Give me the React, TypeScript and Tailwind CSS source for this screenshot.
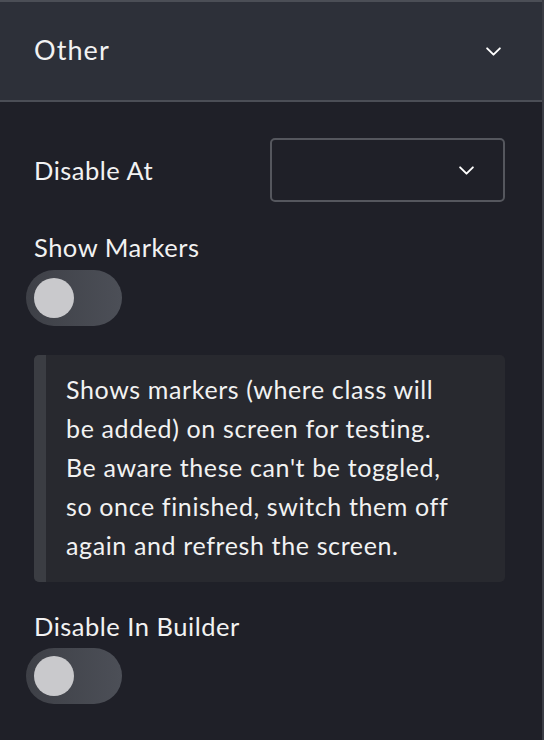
import React, { useState } from 'react';

const Chevron: React.FC<{ className?: string }> = ({ className }) => (
  <svg viewBox="0 0 16 10" fill="none" className={className}>
    <path d="M2 2l6 6 6-6" stroke="currentColor" strokeWidth="1.8" strokeLinecap="round" strokeLinejoin="round" />
  </svg>
);

const Toggle: React.FC<{ on: boolean; onChange: () => void }> = ({ on, onChange }) => (
  <button
    onClick={onChange}
    className="relative w-[96px] h-[56px] rounded-full bg-gradient-to-r from-[#3e4047] to-[#4c4f57]"
  >
    <span
      className={`absolute top-[8px] w-[40px] h-[40px] rounded-full bg-[#c9c9cc] transition-all ${
        on ? 'left-[48px]' : 'left-[8px]'
      }`}
    />
  </button>
);

export default function App() {
  const [showMarkers, setShowMarkers] = useState(false);
  const [disableInBuilder, setDisableInBuilder] = useState(false);

  return (
    <div className="w-[544px] h-[740px] bg-[#1f2028] text-[#f2f2f2] border-r-2 border-[#3a3c44] font-['Lato',sans-serif] overflow-hidden">
      <div className="h-[102px] bg-[#2d3039] border-t-2 border-b-2 border-[#4b4e56] flex items-center justify-between pl-[34px] pr-[40px]">
        <span className="text-[27px] tracking-[0.04em] pb-[1px]">Other</span>
        <Chevron className="w-[17px] h-[11px] text-white" />
      </div>

      <div className="pt-[36px] pl-[34px] pr-[37px]">
        <div className="flex items-center justify-between">
          <span className="text-[25.5px] tracking-[0.02em]">Disable At</span>
          <button className="w-[235px] h-[64px] border-2 border-[#55575e] rounded-[5px] flex items-center justify-end pr-[28px]">
            <Chevron className="w-[17px] h-[11px] text-white" />
          </button>
        </div>

        <div className="mt-[30px] text-[25.5px] tracking-[0.02em] leading-[30px]">Show Markers</div>
        <div className="mt-[8px] -ml-[8px] flex">
          <Toggle on={showMarkers} onChange={() => setShowMarkers(!showMarkers)} />
        </div>

        <div className="mt-[29px] flex bg-[#28292f] rounded-[5px] overflow-hidden h-[227px]">
          <div className="w-[12px] bg-[#3b3d43] shrink-0" />
          <p className="pl-[20px] pr-[45px] pt-[15px] text-[25px] tracking-[0.025em] leading-[39px]">
            Shows markers (where class will be added) on screen for testing. Be aware these can't be toggled, so once
            finished, switch them off again and refresh the screen.
          </p>
        </div>

        <div className="mt-[29px] text-[25.5px] tracking-[0.02em] leading-[30px]">Disable In Builder</div>
        <div className="mt-[7px] -ml-[8px] flex">
          <Toggle on={disableInBuilder} onChange={() => setDisableInBuilder(!disableInBuilder)} />
        </div>
      </div>
    </div>
  );
}
